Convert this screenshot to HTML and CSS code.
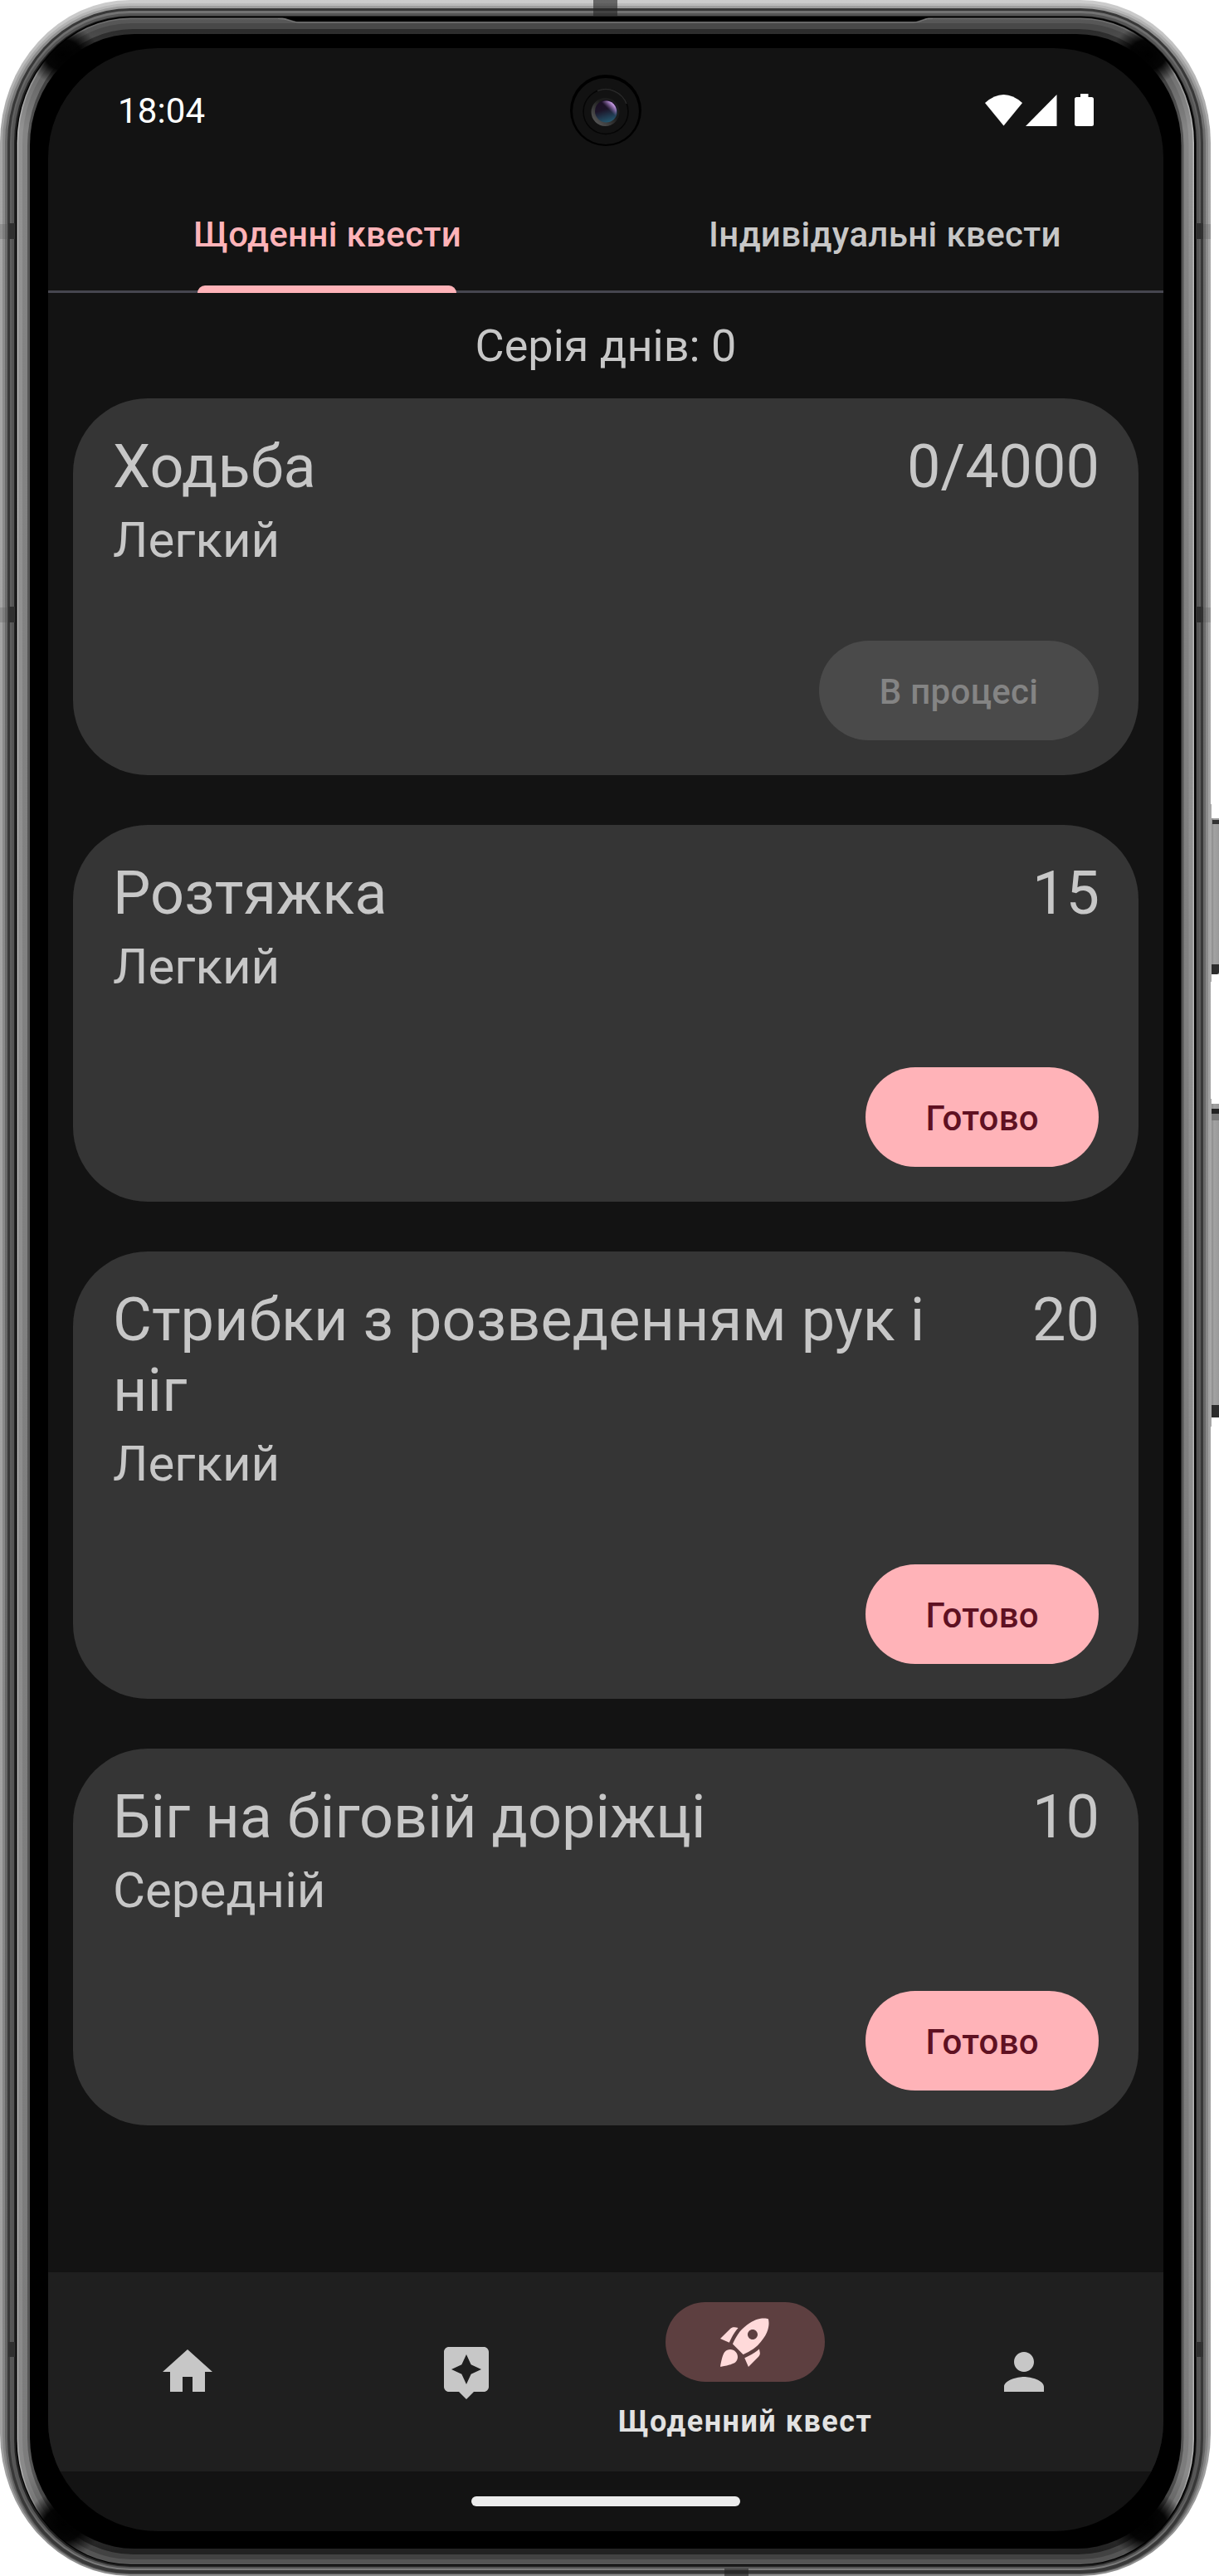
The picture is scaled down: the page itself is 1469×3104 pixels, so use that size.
FILE: index.html
```html
<!DOCTYPE html>
<html lang="uk">
<head>
<meta charset="utf-8">
<title>Щоденні квести</title>
<link rel="stylesheet" href="styles.css">
</head>
<body>
<div class="phone">
  <svg class="frame" viewBox="0 0 1469 3104" width="1469" height="3104" aria-hidden="true">
    <defs>
      <linearGradient id="g0" gradientUnits="userSpaceOnUse" x1="0" y1="0" x2="0" y2="3104"><stop offset="0" stop-color="#ccc"/><stop offset=".01" stop-color="#c8c8c8"/><stop offset=".05" stop-color="#a6a6a6"/><stop offset=".96" stop-color="#a0a0a0"/><stop offset="1" stop-color="#8c8c8c"/></linearGradient>
      <linearGradient id="g1" gradientUnits="userSpaceOnUse" x1="0" y1="0" x2="0" y2="3104"><stop offset="0" stop-color="#bcbcbc"/><stop offset=".05" stop-color="#8c8c8c"/><stop offset=".96" stop-color="#858585"/><stop offset="1" stop-color="#585858"/></linearGradient>
      <linearGradient id="g2" gradientUnits="userSpaceOnUse" x1="0" y1="0" x2="0" y2="3104"><stop offset="0" stop-color="#a0a0a0"/><stop offset=".05" stop-color="#6c6c6c"/><stop offset=".96" stop-color="#666"/><stop offset="1" stop-color="#444"/></linearGradient>
      <linearGradient id="g3" gradientUnits="userSpaceOnUse" x1="0" y1="0" x2="0" y2="3104"><stop offset="0" stop-color="#757575"/><stop offset=".05" stop-color="#606060"/><stop offset=".96" stop-color="#575757"/><stop offset="1" stop-color="#808080"/></linearGradient>
      <linearGradient id="g4" gradientUnits="userSpaceOnUse" x1="0" y1="0" x2="0" y2="3104"><stop offset="0" stop-color="#6e6e6e"/><stop offset=".012" stop-color="#6e6e6e"/><stop offset=".05" stop-color="#b8b8b8"/><stop offset=".96" stop-color="#b0b0b0"/><stop offset=".99" stop-color="#555"/></linearGradient>
      <linearGradient id="g5" gradientUnits="userSpaceOnUse" x1="0" y1="0" x2="0" y2="3104"><stop offset="0" stop-color="#5c5c5c"/><stop offset=".012" stop-color="#555"/><stop offset=".05" stop-color="#929292"/><stop offset=".96" stop-color="#8a8a8a"/><stop offset=".99" stop-color="#555"/></linearGradient>
      <linearGradient id="g6" gradientUnits="userSpaceOnUse" x1="0" y1="0" x2="0" y2="3104"><stop offset="0" stop-color="#484848"/><stop offset=".012" stop-color="#484848"/><stop offset=".05" stop-color="#848484"/><stop offset=".96" stop-color="#7c7c7c"/><stop offset=".99" stop-color="#424242"/></linearGradient>
      <linearGradient id="g7" gradientUnits="userSpaceOnUse" x1="0" y1="0" x2="0" y2="3104"><stop offset="0" stop-color="#2c2c2c"/><stop offset=".012" stop-color="#2c2c2c"/><stop offset=".05" stop-color="#555"/><stop offset=".96" stop-color="#555"/><stop offset=".99" stop-color="#222"/></linearGradient>
      <radialGradient id="fade"><stop offset="0" stop-color="#000"/><stop offset=".5" stop-color="#000" stop-opacity=".95"/><stop offset="1" stop-color="#000" stop-opacity="0"/></radialGradient>
      <clipPath id="glass"><rect x="19" y="20" width="1422" height="3071" rx="138" ry="153"/></clipPath>
      <clipPath id="body"><rect width="1459" height="3104" rx="157" ry="172"/></clipPath>
      <linearGradient id="key" x1="0" x2="1" y1="0" y2="0"><stop offset="0" stop-color="#8a8a8a"/><stop offset=".35" stop-color="#a2a2a2"/><stop offset="1" stop-color="#999"/></linearGradient>
    </defs>
    <!-- side keys -->
    <rect x="1459" y="969" width="1" height="214" fill="#aaa"/>
    <rect x="1459" y="1324" width="1" height="395" fill="#aaa"/>
    <rect x="1460" y="986" width="9" height="188" fill="url(#key)"/>
    <path d="M1461 988h8v5h-8z" fill="#333"/><path d="M1460 1162h9v10l-2 2h-7z" fill="#2c2c2c"/>
    <rect x="1460" y="1330" width="9" height="378" fill="url(#key)"/>
    <path d="M1460 1336h9v6h-9z" fill="#222"/><path d="M1460 1342h9v8h-9z" fill="#777"/><path d="M1460 1693h9v15h-9z" fill="#2c2c2c"/>
    <!-- metal rim -->
    <g clip-path="url(#body)">
      <rect width="1459" height="3104" fill="url(#g0)"/>
      <rect x="3" y="4" width="1453" height="3098" rx="154" ry="168" fill="url(#g1)"/>
      <rect x="6" y="7" width="1447" height="3094" rx="151" ry="165" fill="url(#g2)"/>
      <rect x="9" y="10" width="1441" height="3091" rx="148" ry="162" fill="#383838"/>
      <rect x="12" y="13" width="1435" height="3084" rx="145" ry="159" fill="url(#g3)"/>
      <rect x="14" y="16" width="1431" height="3079" rx="143" ry="156" fill="#555"/>
      <rect x="17" y="19" width="1425" height="3074" rx="140" ry="153" fill="#222"/>
      <!-- antenna breaks -->
      <path d="M715 0h29v19h-29zM873 3095h29v9h-29z" fill="#222" opacity=".6"/>
      <path d="M10 269h8v19h-8zM10 731h8v19h-8zM10 2822h8v18h-8zM1441 269h9v19h-9zM1441 731h9v19h-9zM1441 2822h9v18h-9z" fill="#303030"/>
      <path d="M0 270h10v18H0zM0 732h10v18H0zM1450 270h9v18h-9zM1450 732h9v18h-9z" fill="#555" opacity=".25"/>
    </g>
    <!-- curved glass edge -->
    <g clip-path="url(#glass)">
      <rect x="18" y="20" width="1424" height="3072" fill="#000"/>
      <rect x="20.500" y="21.500" width="1418.500" height="3068.500" rx="137" ry="151" fill="url(#g4)"/>
      <rect x="22" y="23" width="1415.500" height="3066" rx="136" ry="150" fill="url(#g5)"/>
      <rect x="27" y="28" width="1405.500" height="3056" rx="131" ry="145" fill="url(#g6)"/>
      <rect x="33" y="35" width="1393.500" height="3043" rx="127" ry="140" fill="url(#g7)"/>
      <rect x="36" y="41" width="1387.500" height="3030" rx="126" ry="134" fill="#000"/>
      <ellipse cx="76" cy="66" rx="44" ry="36" fill="url(#fade)"/>
      <ellipse cx="1383" cy="66" rx="44" ry="36" fill="url(#fade)"/>
      <ellipse cx="76" cy="3042" rx="46" ry="40" fill="url(#fade)"/>
      <ellipse cx="1383" cy="3042" rx="46" ry="40" fill="url(#fade)"/>
      <path d="M337 20L357 26H1104L1122 20z" fill="#000"/>
      <path d="M335 22.500Q343 22.500 348 24.500T359 27H1101Q1107 27 1112 24.500T1124 22.500" fill="none" stroke="#7a7a7a"/>
    </g>
  </svg>

  <main class="screen">
    <header class="status">
      <span class="clock">18:04</span>
      <svg class="signals" width="132" height="40" viewBox="0 0 132 40" fill="#fff" aria-hidden="true">
        <path d="M0 11Q22.500-9 45 11L22.500 38.500z"/><path d="M86.500 1V39H49z"/>
        <path d="M115 0h9.500v4h4a2.500 2.500 0 0 1 2.500 2.500V36.500a2.500 2.500 0 0 1-2.500 2.500h-18a2.500 2.500 0 0 1-2.500-2.500V6.500A2.500 2.500 0 0 1 110.500 4h4.500z"/>
      </svg>
      <svg class="camera" width="88" height="88" viewBox="0 0 88 88" aria-hidden="true">
        <defs>
          <linearGradient id="lens" x1=".2" y1="0" x2=".5" y2="1"><stop offset="0" stop-color="#1a0d22"/><stop offset=".45" stop-color="#1c1428"/><stop offset="1" stop-color="#24556c"/></linearGradient>
          <linearGradient id="shine" x1="0" y1="1" x2="1" y2="0"><stop offset=".6" stop-color="#b58be0" stop-opacity="0"/><stop offset=".85" stop-color="#d6a8f2"/></linearGradient>
          <linearGradient id="bezel" x1="0" y1="1" x2="1" y2="0"><stop offset="0" stop-color="#666"/><stop offset=".6" stop-color="#1c1c1c"/></linearGradient>
        </defs>
        <circle cx="44" cy="44" r="43" fill="#000"/><circle cx="44" cy="45" r="40" fill="#121212"/>
        <circle cx="44" cy="45.500" r="27" fill="#121212" stroke="#050505" stroke-width="1.500"/>
        <path d="M34 20.500A27 27 0 0 1 69 36" fill="none" stroke="#292929" stroke-width="1.500"/>
        <circle cx="43.500" cy="46" r="17" fill="url(#bezel)"/>
        <circle cx="44.500" cy="45" r="13.500" fill="url(#lens)"/><circle cx="44.500" cy="45" r="12.500" fill="url(#shine)"/>
      </svg>
    </header>

    <nav class="tabs">
      <div class="tab tab-active">Щоденні квести</div>
      <div class="tab">Індивідуальні квести</div>
    </nav>

    <div class="streak">Серія днів: 0</div>

    <section class="quests">
      <article class="card">
        <div class="head"><h2>Ходьба</h2><span class="amount">0/4000</span></div>
        <p class="level">Легкий</p>
        <button class="btn btn-off" disabled>В процесі</button>
      </article>
      <article class="card">
        <div class="head"><h2>Розтяжка</h2><span class="amount">15</span></div>
        <p class="level">Легкий</p>
        <button class="btn">Готово</button>
      </article>
      <article class="card">
        <div class="head"><h2>Стрибки з розведенням рук і ніг</h2><span class="amount">20</span></div>
        <p class="level">Легкий</p>
        <button class="btn">Готово</button>
      </article>
      <article class="card">
        <div class="head"><h2>Біг на біговій доріжці</h2><span class="amount">10</span></div>
        <p class="level">Середній</p>
        <button class="btn">Готово</button>
      </article>
    </section>

    <nav class="bottom">
      <div class="item"><svg class="icon" viewBox="0 0 24 24"><path d="M10 20v-6h4v6h5v-8h3L12 3 2 12h3v8z"/></svg></div>
      <div class="item"><svg class="icon" viewBox="0 0 24 24"><path d="M19 2H5c-1.110 0-2 .9-2 2v14c0 1.100.89 2 2 2h4l3 3 3-3h4c1.100 0 2-.9 2-2V4c0-1.100-.9-2-2-2zm-5.120 10.880L12 17l-1.880-4.120L6 11l4.120-1.880L12 5l1.880 4.120L18 11l-4.120 1.880z"/></svg></div>
      <div class="item item-active">
        <span class="pill"><svg class="icon" viewBox="0 0 24 24"><path fill-rule="evenodd" d="M9.190 6.350c-2.040 2.290-3.440 5.580-3.570 5.890L2 10.690l4.050-4.050c.47-.47 1.150-.68 1.810-.55zM11.170 17s3.740-1.550 5.890-3.700c5.400-5.400 4.500-9.620 4.210-10.570-.95-.3-5.170-1.190-10.570 4.210C8.550 9.090 7 12.830 7 12.830zM17.650 14.810c-2.290 2.040-5.580 3.440-5.890 3.570L13.310 22l4.050-4.050c.47-.47.68-1.150.55-1.810zM9 18c0 .83-.34 1.580-.88 2.120C6.940 21.300 2 22 2 22s.7-4.940 1.880-6.120C4.420 15.340 5.170 15 6 15c1.660 0 3 1.340 3 3zM13 9c0-1.100.9-2 2-2s2 .9 2 2-.9 2-2 2-2-.9-2-2z"/></svg></span>
        <span class="label">Щоденний квест</span>
      </div>
      <div class="item"><svg class="icon" viewBox="0 0 24 24"><path d="M12 12c2.210 0 4-1.790 4-4s-1.790-4-4-4-4 1.790-4 4 1.790 4 4 4zm0 2c-2.670 0-8 1.340-8 4v2h16v-2c0-2.660-5.330-4-8-4z"/></svg></div>
    </nav>
    <div class="gesture"><span class="handle"></span></div>
  </main>
</div>
</body>
</html>
```
FILE: styles.css
```css
* { box-sizing: border-box; }
body { margin: 0; background: #fff; font-family: Roboto, "Noto Sans", sans-serif; color: #c7c7c7; }
.phone { position: relative; width: 1469px; height: 3104px; padding: 58px 67px 54px 58px; overflow: hidden; }
.frame { position: absolute; inset: 0; display: block; }
.screen { position: relative; display: flex; flex-direction: column; width: 1344px; height: 2992px; border-radius: 132px; background: #131313; overflow: hidden; }

.status { position: relative; flex: none; display: flex; justify-content: space-between; align-items: center; height: 151px; padding: 0 83px 0 84px; }
.clock { font-size: 42px; line-height: 50px; letter-spacing: .15px; color: #fff; }
.signals { display: block; margin-bottom: 2px; }
.camera { position: absolute; left: 628px; top: 31px; }

.tabs { flex: none; display: flex; height: 144px; border-bottom: 3px solid #46464f; }
.tab { flex: 1; display: flex; align-items: center; justify-content: center; padding: 5px 0 0 1px; font-size: 42px; font-weight: 500; letter-spacing: .35px; white-space: nowrap; }
.tab-active { position: relative; color: #ffb3b8; }
.tab-active::after { content: ""; position: absolute; left: 180px; width: 312px; bottom: -3px; height: 9px; border-radius: 9px 9px 0 0; background: #ffb3b8; }

.streak { flex: none; display: flex; align-items: center; justify-content: center; height: 127px; font-size: 54px; }
.quests { flex: 1; display: flex; flex-direction: column; gap: 60px; padding: 0 30px; }
.card { display: flex; flex-direction: column; padding: 40px 47px 42px 48px; border-radius: 90px; background: #353535; }
.head { display: flex; justify-content: space-between; gap: 48px; }
h2, .amount { margin: 0; font-size: 72px; font-weight: 400; line-height: 85px; }
h2 { max-width: 1010px; letter-spacing: .06px; }
.level { margin: 6px 0 0; height: 161px; font-size: 60px; line-height: 80px; }
.btn { align-self: flex-end; height: 120px; margin-right: 1px; padding: 4px 72px 0; border: 0; border-radius: 60px; background: #ffb3b8; color: #5f1122; font: 500 42px/50px Roboto, sans-serif; letter-spacing: .3px; }
.btn-off { width: 337px; padding: 4px 0 0; background: #4a4a4a; color: #848484; }

.bottom { flex: none; display: flex; height: 240px; background: #1f1f1f; }
.item { flex: 1; display: flex; flex-direction: column; align-items: center; justify-content: center; color: #c7c7c7; }
.icon { display: block; width: 72px; height: 72px; fill: currentColor; }
.item-active { justify-content: flex-start; padding-top: 36px; }
.pill { display: flex; align-items: center; justify-content: center; width: 192px; height: 96px; border-radius: 48px; background: #5d3f40; color: #ffdada; }
.label { margin-top: 24px; font-size: 36px; line-height: 48px; font-weight: 700; letter-spacing: 1.500px; white-space: nowrap; color: #e2e2e2; }
.gesture { flex: none; display: flex; justify-content: center; height: 72px; padding-top: 30px; }
.handle { width: 324px; height: 12px; border-radius: 6px; background: #ececec; }
```
